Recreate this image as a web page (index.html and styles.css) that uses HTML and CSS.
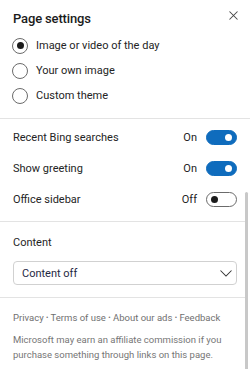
FILE: index.html
```html
<!DOCTYPE html>
<html>
<head>
<meta charset="utf-8">
<link rel="stylesheet" href="styles.css">
</head>
<body>
<div class="panel">
  <div class="header">
    <h1 class="title">Page settings</h1>
    <button class="close" aria-label="Close">
      <svg width="9" height="9" viewBox="0 0 9 9"><path d="M0.5 0.5L8.5 8.5M8.5 0.5L0.5 8.5" stroke="#444" stroke-width="1.05" fill="none"/></svg>
    </button>
  </div>
  <div class="radios">
    <label class="radio-row"><span class="radio checked"></span><span>Image or video of the day</span></label>
    <label class="radio-row"><span class="radio"></span><span>Your own image</span></label>
    <label class="radio-row"><span class="radio"></span><span>Custom theme</span></label>
  </div>
  <div class="scroll">
    <div class="section toggles">
      <div class="toggle-row"><span class="label">Recent Bing searches</span><span class="state">On</span><span class="toggle on"></span></div>
      <div class="toggle-row"><span class="label">Show greeting</span><span class="state">On</span><span class="toggle on"></span></div>
      <div class="toggle-row"><span class="label">Office sidebar</span><span class="state">Off</span><span class="toggle"></span></div>
    </div>
    <div class="section content">
      <div class="content-label">Content</div>
      <div class="select">
        <span>Content off</span>
        <svg width="12" height="7" viewBox="0 0 12 7"><path d="M0.5 0.5L6 6L11.5 0.5" stroke="#333" stroke-width="1.05" fill="none"/></svg>
      </div>
    </div>
    <div class="section footer">
      <div class="links">Privacy <span class="dot">•</span> Terms of use <span class="dot">•</span> About our ads <span class="dot">•</span> Feedback</div>
      <p class="disclaimer">Microsoft may earn an affiliate commission if you purchase something through links on this page.</p>
    </div>
    <div class="scrollbar"></div>
  </div>
</div>
</body>
</html>
```
FILE: styles.css
```css
* { box-sizing: border-box; }
html, body { margin: 0; padding: 0; background: #fff; }
body { font-family: Roboto, "Open Sans", sans-serif; color: #1f1f1f; }
.panel { width: 250px; height: 369px; overflow: hidden; position: relative; background: #fff; }
.header { display: flex; justify-content: space-between; align-items: center; padding: 6px 11px 0 13px; height: 30px; }
.title { margin: 0; font-size: 13px; font-weight: 500; letter-spacing: -0.15px; color: #1b1b1b; }
.close { border: 0; background: none; padding: 0; width: 11px; height: 11px; display: flex; align-items: center; justify-content: center; margin-top: -5px; }
.radios { display: flex; flex-direction: column; padding: 3px 0 10px 12px; border-bottom: 1px solid #e3e3e3; }
.radio-row { display: flex; align-items: center; height: 25px; font-size: 11px; gap: 8px; color: #242424; }
.radio { width: 16px; height: 16px; border: 1px solid #6b6b6b; border-radius: 50%; display: flex; align-items: center; justify-content: center; }
.radio.checked::after { content: ""; width: 7px; height: 7px; border-radius: 50%; background: #1b1b1b; }
.scroll { position: relative; }
.section { border-bottom: 1px solid #e3e3e3; margin-right: 3px; }
.toggles { padding: 3px 10px 6px 13px; }
.toggle-row { display: flex; align-items: center; height: 31px; font-size: 11px; color: #242424; }
.toggle-row .label { flex: 1; }
.toggle-row .state { margin-right: 9px; }
.toggle { width: 31px; height: 15px; border-radius: 8px; border: 1px solid #6b6b6b; background: #fff; position: relative; }
.toggle::after { content: ""; position: absolute; top: 3px; left: 4px; width: 7px; height: 7px; border-radius: 50%; background: #1b1b1b; }
.toggle.on { background: #0f6cbd; border-color: #0f6cbd; }
.toggle.on::after { left: auto; right: 4px; background: #fff; }
.content { padding: 13px 10px 12px 13px; }
.content-label { font-size: 11px; color: #1f1f1f; line-height: 16px; margin-bottom: 10px; }
.select { height: 24px; border: 1px solid #d1d1d1; border-radius: 4px; display: flex; align-items: center; justify-content: space-between; padding: 0 4px 0 8px; font-size: 11px; color: #1f2944; }
.footer { border-bottom: 0; padding: 13px 13px; }
.links { font-size: 9.5px; color: #707070; line-height: 14px; white-space: nowrap; }
.dot { font-size: 7px; vertical-align: 1px; }
.disclaimer { margin: 7px 0 0; font-size: 9.5px; line-height: 15px; color: #767676; }
.scrollbar { position: absolute; right: 2px; top: 73px; width: 3px; height: 300px; background: #c8c8c8; border-radius: 2px; }
```
